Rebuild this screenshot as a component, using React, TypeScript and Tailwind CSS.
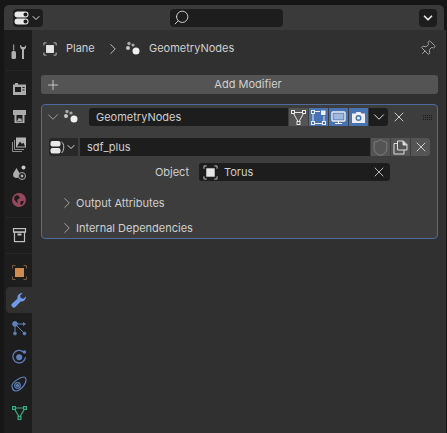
import React from 'react';
import { ChevronDown, ChevronRight, Plus, X, Search, Pin, Shield } from 'lucide-react';

const ObjectIcon = ({ size = 16 }: { size?: number }) => (
  <svg width={size} height={size} viewBox="0 0 16 16" fill="none" stroke="#c4c4c4" strokeWidth="1">
    <path d="M1 4V1H4M12 1H15V4M15 12V15H12M4 15H1V12" />
    <rect x="3.5" y="3.5" width="9" height="9" fill="#e6e6e6" stroke="none" />
  </svg>
);

const NodesIcon = () => (
  <svg width="16" height="16" viewBox="0 0 16 16" fill="#d8d8d8">
    <circle cx="4" cy="2.5" r="1.7" fill="#a8a8a8" />
    <circle cx="8" cy="4" r="1.6" fill="#a8a8a8" />
    <circle cx="3" cy="7" r="2" fill="#c8c8c8" />
    <circle cx="11" cy="10" r="3.5" fill="#f0f0f0" />
  </svg>
);

const SideTab = ({ active, children }: { active?: boolean; children: React.ReactNode }) => (
  <div className="flex h-[28px] items-center">
    <div className={`flex h-[26px] w-[26px] items-center justify-center rounded-l-[4px] ${active ? 'bg-[#303030]' : ''}`}>
      {children}
    </div>
  </div>
);

const Separator = ({ h }: { h: string }) => (
  <div className={`flex w-[26px] items-center ${h}`}>
    <div className="h-px w-full bg-[#272727]" />
  </div>
);

const App: React.FC = () => {
  return (
    <div className="flex h-[433px] w-[447px] flex-col overflow-hidden bg-[#161616] pl-1 pr-px pt-[5px] font-['Inter','Liberation_Sans',sans-serif] text-[11px] text-[#cfcfcf]">
      {/* header */}
      <div className="mr-[2px] flex h-[25px] shrink-0 items-center rounded-t-[5px] bg-[#3a3a3a] pl-[9px] pr-[7px]">
        <div className="flex h-[18px] w-[30px] items-center justify-center gap-px rounded-[4px] bg-[#1d1d1d]">
          <svg width="15" height="14" viewBox="0 0 15 14" fill="#e8e8e8">
            <rect x="0.5" y="0.5" width="14" height="6" rx="3" />
            <rect x="0.5" y="7.5" width="14" height="6" rx="3" />
            <circle cx="11.5" cy="3.5" r="2" fill="#1d1d1d" />
            <circle cx="11.5" cy="10.5" r="2" fill="#1d1d1d" />
          </svg>
          <ChevronDown size={12} strokeWidth={2} color="#e0e0e0" />
        </div>
        <div className="ml-[127px] flex h-[18px] w-[113px] items-center rounded-[4px] bg-[#1d1d1d] pl-[3px]">
          <Search size={17} strokeWidth={1.3} color="#d8d8d8" className="-scale-x-100" />
        </div>
        <div className="ml-auto flex h-[18px] w-[18px] items-center justify-center rounded-[4px] bg-[#1d1d1d]">
          <ChevronDown size={14} strokeWidth={3} color="#e8e8e8" />
        </div>
      </div>

      <div className="flex min-h-0 flex-1">
        {/* tabs */}
        <div className="flex w-[28px] shrink-0 flex-col items-end bg-[#1d1d1d] pt-[8px]">
          <SideTab>
            <svg width="16" height="16" viewBox="0 0 16 16" fill="#b0b0b0">
              <rect x="2.2" y="0.5" width="1" height="6" />
              <rect x="0.5" y="7" width="4.5" height="8" rx="1.5" />
              <path d="M9 1.5C9 4 10 5 11 5.5V15H13V5.5C14.5 5 15.5 3.5 15 1L13.5 3H11L9.8 1Z" />
            </svg>
          </SideTab>
          <Separator h="h-[8px]" />
          <SideTab>
            <svg width="15" height="15" viewBox="0 0 15 15" fill="#acacac">
              <path d="M1 3.5H3V2H6V3.5H14V14H1ZM3 6V11H9V6ZM10.5 6V7H12.5V6ZM10.5 8.5V9.5H12.5V8.5Z" fillRule="evenodd" />
            </svg>
          </SideTab>
          <SideTab>
            <svg width="15" height="15" viewBox="0 0 15 15" fill="#acacac">
              <path d="M1 1H14V6H12.5V14H2.5V6H1ZM4.5 6V12.5H10.5V6Z" fillRule="evenodd" />
              <path d="M5 12L7 8.5L8 10L9 9L10 12Z" />
            </svg>
          </SideTab>
          <SideTab>
            <svg width="15" height="15" viewBox="0 0 15 15" fill="none" stroke="#8e8e8e">
              <rect x="4" y="0.5" width="10" height="10" fill="#b4b4b4" stroke="none" />
              <path d="M5 9.5L8 4.5L10 7L11.5 5.5L13 9.5Z" fill="#1d1d1d" stroke="none" />
              <path d="M2.5 3V12.5H12M0.5 5V14.5H10" />
            </svg>
          </SideTab>
          <SideTab>
            <svg width="15" height="15" viewBox="0 0 15 15" fill="#acacac">
              <path d="M4.5 3C6 6 8 7.5 8 10.2A3.6 3.6 0 0 1 1 10.2C1 7.5 3 6 4.5 3Z" />
              <circle cx="11.5" cy="2.5" r="2" fill="#c8c8c8" />
              <circle cx="10" cy="11" r="3.5" fill="#1d1d1d" stroke="#acacac" />
              <circle cx="10" cy="11" r="1.4" />
            </svg>
          </SideTab>
          <SideTab>
            <svg width="16" height="16" viewBox="0 0 16 16" fill="#96475c">
              <circle cx="8" cy="8" r="7" />
              <path d="M4 4L7 3L9 6L6 8L7 11L5 10L3 7ZM10 9L13 9L11 13L9 12Z" fill="#1d1d1d" />
            </svg>
          </SideTab>
          <Separator h="h-[7px]" />
          <SideTab>
            <svg width="15" height="15" viewBox="0 0 15 15" fill="none" stroke="#c0c0c0" strokeWidth="1.2">
              <rect x="1.5" y="0.6" width="12" height="3.5" />
              <rect x="2.5" y="4.1" width="10" height="9.5" />
              <path d="M5.5 6.5H9.5" strokeWidth="2" />
            </svg>
          </SideTab>
          <Separator h="h-[9px]" />
          <SideTab>
            <svg width="15" height="15" viewBox="0 0 15 15" fill="none" stroke="#7a5a3a">
              <path d="M0.5 3.5V0.5H3.5M11.5 0.5H14.5V3.5M14.5 11.5V14.5H11.5M3.5 14.5H0.5V11.5" />
              <rect x="3" y="3" width="9" height="9" fill="#d08c4f" stroke="none" />
            </svg>
          </SideTab>
          <SideTab active>
            <svg width="16" height="16" viewBox="0 0 16 16" fill="#6f9be8">
              <path d="M11 1A4.5 4.5 0 0 0 6.6 6.6L1.2 11.4A2.3 2.3 0 0 0 4.6 14.8L9.6 9.4A4.6 4.6 0 0 0 15 4.5L12.4 6.8L9.6 6L9.2 3.4L11.8 1.1Z" />
            </svg>
          </SideTab>
          <SideTab>
            <svg width="15" height="15" viewBox="0 0 15 15" fill="#5f80bd" stroke="#5f80bd">
              <circle cx="3" cy="3" r="2.4" />
              <circle cx="3" cy="12.5" r="1.4" />
              <circle cx="12.5" cy="12.5" r="1.4" />
              <path d="M3 3H12.5M3 3V12M3 3L12 12" fill="none" />
              <path d="M11 1L14 3L11 5Z" stroke="none" />
            </svg>
          </SideTab>
          <SideTab>
            <svg width="15" height="15" viewBox="0 0 15 15" fill="#5f80bd">
              <path d="M11.5 3A6.3 6.3 0 1 0 13.5 8" fill="none" stroke="#5f80bd" strokeWidth="1.2" />
              <circle cx="7.2" cy="8.2" r="3" />
              <circle cx="12.5" cy="3" r="1.7" />
            </svg>
          </SideTab>
          <SideTab>
            <svg width="16" height="16" viewBox="0 0 16 16" fill="none" stroke="#5f80bd" strokeWidth="1.2">
              <path d="M1 9.5C1 6.5 9 1 13 1C15 1 15.5 4 14.5 6.5C13 10.5 8.5 15 5 15C2.5 15 1 12.5 1 9.5Z" />
              <circle cx="6.5" cy="9.5" r="2.8" />
              <circle cx="6.5" cy="9.5" r="1" fill="#5f80bd" />
            </svg>
          </SideTab>
          <SideTab>
            <svg width="15" height="15" viewBox="0 0 15 15" fill="none" stroke="#35ad7e" strokeWidth="1.2">
              <path d="M2 3H13L7.5 12.5Z" />
              <rect x="0.6" y="1.6" width="2.8" height="2.8" fill="#1d1d1d" />
              <rect x="11.6" y="1.6" width="2.8" height="2.8" fill="#1d1d1d" />
              <rect x="6.1" y="11.6" width="2.8" height="2.8" fill="#1d1d1d" />
            </svg>
          </SideTab>
        </div>

        {/* properties */}
        <div className="min-w-0 flex-1 bg-[#303030] pr-[8px] pl-[9px]">
          <div className="flex h-[37px] items-center pl-[2px]">
            <ObjectIcon size={14} />
            <span className="ml-[9px] w-[38px]">Plane</span>
            <ChevronRight size={18} strokeWidth={1.2} />
            <div className="ml-[3px]"><NodesIcon /></div>
            <span className="ml-[8px]">GeometryNodes</span>
            <Pin size={17} strokeWidth={1.3} color="#a8a8a8" className="ml-auto mr-[2px] rotate-45" />
          </div>

          <div className="mt-[8px] flex h-[19px] items-center rounded-[3px] bg-[#545454] pl-[4px] pr-[3px]">
            <Plus size={16} strokeWidth={1.2} color="#e0e0e0" />
            <span className="flex-1 text-center">Add Modifier</span>
          </div>

          <div className="mt-[10px] h-[135px] rounded-[4px] border border-[#4d6c9c] bg-[#3d3d3d] pt-[3px] pl-[6px] pr-[4px]">
            <div className="flex h-[18px] items-center">
              <ChevronDown size={18} strokeWidth={1.2} color="#a8a8a8" className="-ml-[4px]" />
              <div className="ml-px"><NodesIcon /></div>
              <div className="ml-[10px] flex h-[18px] w-[199px] items-center rounded-l-[3px] bg-[#1d1d1d] px-[7px]">GeometryNodes</div>
              <div className="ml-px flex gap-px">
                <div className="flex h-[18px] w-[19px] items-center justify-center bg-[#545454]">
                  <svg width="15" height="15" viewBox="0 0 15 15" fill="none" stroke="#e4e4e4">
                    <path d="M2 2.5H13L7.5 12.5Z" />
                    <rect x="0.5" y="0.5" width="3" height="3" fill="#545454" />
                    <rect x="11.5" y="0.5" width="3" height="3" fill="#545454" />
                    <rect x="6" y="11.5" width="3" height="3" fill="#545454" />
                  </svg>
                </div>
                <div className="flex h-[18px] w-[19px] items-center justify-center bg-[#4772b3]">
                  <svg width="15" height="15" viewBox="0 0 15 15" fill="none" stroke="#e8e8e8">
                    <path d="M2 3V12M3 13.5H12M13 12V6M3 1.5H9" />
                    <rect x="0.5" y="0.5" width="3" height="3" fill="#4772b3" />
                    <rect x="0.5" y="11.5" width="3" height="3" fill="#4772b3" />
                    <rect x="11.5" y="11.5" width="3" height="3" fill="#4772b3" />
                    <rect x="10" y="0.5" width="4.5" height="4.5" fill="#f0f0f0" stroke="none" />
                  </svg>
                </div>
                <div className="flex h-[18px] w-[19px] items-center justify-center bg-[#4772b3]">
                  <svg width="15" height="15" viewBox="0 0 15 15" fill="none" stroke="#f0f0f0">
                    <rect x="1" y="2" width="13" height="9" rx="1" strokeWidth="1.4" />
                    <rect x="2.5" y="3.5" width="10" height="6" fill="#9fb8dc" stroke="none" />
                    <path d="M7.5 11V13.5M4 13.5H11" />
                  </svg>
                </div>
                <div className="flex h-[18px] w-[19px] items-center justify-center bg-[#4772b3]">
                  <svg width="15" height="15" viewBox="0 0 15 15" fill="#eeeeee">
                    <path d="M1 3.5H4.5L5.5 2H9.5L10.5 3.5H14V13H1ZM7.5 5A3 3 0 1 0 7.5 11A3 3 0 0 0 7.5 5Z" fillRule="evenodd" />
                    <circle cx="7.5" cy="8" r="1.6" />
                  </svg>
                </div>
                <div className="flex h-[18px] w-[19px] items-center justify-center rounded-r-[3px] bg-[#1d1d1d]">
                  <ChevronDown size={18} strokeWidth={1.3} color="#e0e0e0" />
                </div>
              </div>
              <X size={16} strokeWidth={1.3} color="#e0e0e0" className="ml-[3px]" />
              <div className="ml-auto mr-px grid grid-cols-5 gap-x-px gap-y-px">
                {Array.from({ length: 15 }).map((_, i) => (
                  <div key={i} className="h-px w-px bg-[#1a1a1a]" />
                ))}
              </div>
            </div>

            <div className="mt-[12px] ml-px flex h-[18px] items-center">
              <div className="flex h-[18px] w-[29px] items-center justify-center rounded-l-[3px] bg-[#282828]">
                <svg width="15" height="15" viewBox="0 0 15 15" fill="#e8e8e8">
                  <rect x="0.5" y="1" width="10" height="5.5" rx="2" />
                  <rect x="0.5" y="8" width="10" height="5.5" rx="2" />
                  <path d="M11.5 2C14.5 3 14.5 11 11.5 13" fill="none" stroke="#c0c0c0" />
                </svg>
                <ChevronDown size={12} strokeWidth={2} color="#d8d8d8" />
              </div>
              <div className="ml-[2px] flex h-[18px] w-[290px] items-center bg-[#1d1d1d] px-[7px]">sdf_plus</div>
              <div className="ml-px flex gap-px">
                <div className="flex h-[18px] w-[19px] items-center justify-center bg-[#545454]">
                  <Shield size={19} strokeWidth={0.9} color="#8e8e8e" />
                </div>
                <div className="flex h-[18px] w-[19px] items-center justify-center bg-[#545454]">
                  <svg width="15" height="15" viewBox="0 0 15 15" fill="none" stroke="#dcdcdc">
                    <path d="M4.5 3.5H1V14H11V10" />
                    <path d="M4.5 1H10.5L14 4.5V10H4.5Z" />
                    <path d="M10 1V5H14" fill="#dcdcdc" />
                  </svg>
                </div>
                <div className="flex h-[18px] w-[19px] items-center justify-center rounded-r-[3px] bg-[#545454]">
                  <X size={16} strokeWidth={1.3} color="#e0e0e0" />
                </div>
              </div>
            </div>

            <div className="mt-[7px] flex h-[18px] items-center">
              <span className="w-[141px] text-right">Object</span>
              <div className="ml-[10px] flex h-[18px] w-[191px] items-center rounded-[3px] bg-[#1d1d1d] pl-[4px] pr-[3px]">
                <ObjectIcon size={15} />
                <span className="ml-[6px]">Torus</span>
                <X size={16} strokeWidth={1.3} color="#d0d0d0" className="ml-auto" />
              </div>
            </div>

            <div className="mt-[13px] flex h-[18px] items-center pl-[10px]">
              <ChevronRight size={18} strokeWidth={1.2} color="#b0b0b0" />
              <span>Output Attributes</span>
            </div>
            <div className="mt-[7px] flex h-[18px] items-center pl-[10px]">
              <ChevronRight size={18} strokeWidth={1.2} color="#b0b0b0" />
              <span>Internal Dependencies</span>
            </div>
          </div>
        </div>
      </div>
    </div>
  );
};

export default App;
